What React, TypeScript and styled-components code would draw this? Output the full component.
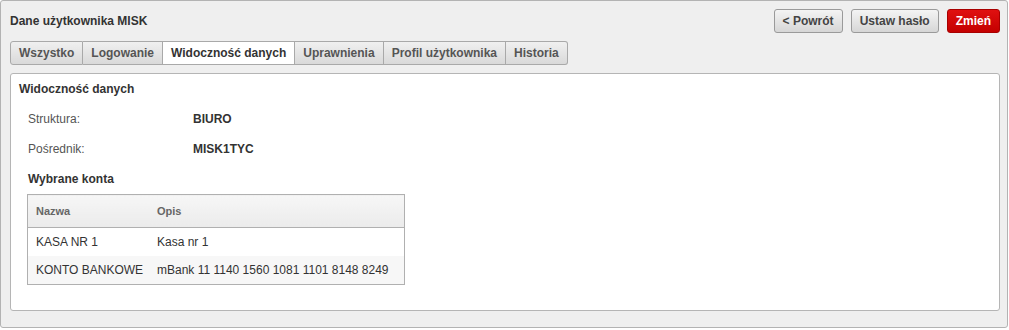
import React from 'react';
import styled, { createGlobalStyle, css } from 'styled-components';

const GlobalStyle = createGlobalStyle`
  html, body {
    margin: 0;
    padding: 0;
    background: #ffffff;
  }
  body {
    font-family: "Liberation Sans", Arial, sans-serif;
    font-size: 12px;
    color: #333;
  }
`;

const Panel = styled.div`
  box-sizing: border-box;
  width: 1008px;
  height: 328px;
  background: #efefef;
  border: 1px solid #b3b3b3;
  border-radius: 3px;
  padding: 8px 7px 0 9px;
`;

const Header = styled.div`
  display: flex;
  align-items: center;
  justify-content: space-between;
  height: 24px;
`;

const Title = styled.h1`
  margin: 0;
  font-size: 12px;
  font-weight: bold;
  color: #333;
`;

const Actions = styled.div`
  display: flex;
  gap: 8px;
`;

const Button = styled.button<{ $primary?: boolean }>`
  box-sizing: border-box;
  height: 24px;
  padding: 0 8px;
  font-family: inherit;
  font-size: 12px;
  font-weight: bold;
  border-radius: 3px;
  cursor: pointer;
  ${(p) =>
    p.$primary
      ? css`
          color: #fff;
          border: 1px solid #a80000;
          background: linear-gradient(#e01010, #c40000);
        `
      : css`
          color: #444;
          border: 1px solid #9a9a9a;
          background: linear-gradient(#f4f4f4, #d6d6d6);
        `}
`;

const Tabs = styled.div`
  display: flex;
  margin-top: 8px;
`;

const Tab = styled.div<{ $active?: boolean }>`
  box-sizing: border-box;
  height: 24px;
  line-height: 22px;
  padding: 0 8px;
  font-weight: bold;
  color: ${(p) => (p.$active ? '#333' : '#555')};
  border: 1px solid #a9a9a9;
  border-left: none;
  background: ${(p) => (p.$active ? '#fff' : 'linear-gradient(#f0f0f0, #d9d9d9)')};
  &:first-child {
    border-left: 1px solid #a9a9a9;
    border-radius: 3px 0 0 3px;
  }
  &:last-child {
    border-radius: 0 3px 3px 0;
  }
`;

const Content = styled.div`
  box-sizing: border-box;
  margin-top: 8px;
  width: 990px;
  height: 238px;
  background: #fff;
  border: 1px solid #b5b5b5;
  border-radius: 3px;
  padding: 8px 8px 0 8px;
`;

const SectionTitle = styled.h2`
  margin: 0;
  font-size: 12px;
  font-weight: bold;
  color: #333;
  line-height: 15px;
`;

const Fields = styled.div`
  margin-top: 15px;
  padding-left: 9px;
  display: grid;
  grid-template-columns: 165px 1fr;
  row-gap: 15px;
  line-height: 15px;
`;

const Label = styled.div`
  color: #555;
`;

const Value = styled.div`
  font-weight: bold;
  color: #333;
`;

const SubTitle = styled(SectionTitle)`
  margin-top: 15px;
  padding-left: 9px;
`;

const Table = styled.table`
  margin: 7px 0 0 8px;
  border-collapse: collapse;
  border: 1px solid #b0b0b0;
  width: 378px;
  table-layout: fixed;
`;

const Th = styled.th`
  height: 32px;
  text-align: left;
  font-size: 11px;
  font-weight: bold;
  color: #666;
  padding: 0 8px;
  background: linear-gradient(#f6f6f6, #ebebeb);
  border-bottom: 1px solid #b0b0b0;
  &:first-child {
    width: 105px;
  }
`;

const Tr = styled.tr<{ $alt?: boolean }>`
  background: ${(p) => (p.$alt ? '#f7f7f7' : '#fff')};
  & + & td {
    border-top: 1px solid #dcdcdc;
  }
`;

const Td = styled.td`
  height: 28px;
  padding: 0 8px;
  color: #333;
  white-space: nowrap;
`;

const rows = [
  { nazwa: 'KASA NR 1', opis: 'Kasa nr 1' },
  { nazwa: 'KONTO BANKOWE', opis: 'mBank 11 1140 1560 1081 1101 8148 8249' },
];

const tabs = ['Wszystko', 'Logowanie', 'Widoczność danych', 'Uprawnienia', 'Profil użytkownika', 'Historia'];

export default function App() {
  return (
    <>
      <GlobalStyle />
      <Panel>
        <Header>
          <Title>Dane użytkownika MISK</Title>
          <Actions>
            <Button>&lt; Powrót</Button>
            <Button>Ustaw hasło</Button>
            <Button $primary>Zmień</Button>
          </Actions>
        </Header>
        <Tabs>
          {tabs.map((t) => (
            <Tab key={t} $active={t === 'Widoczność danych'}>
              {t}
            </Tab>
          ))}
        </Tabs>
        <Content>
          <SectionTitle>Widoczność danych</SectionTitle>
          <Fields>
            <Label>Struktura:</Label>
            <Value>BIURO</Value>
            <Label>Pośrednik:</Label>
            <Value>MISK1TYC</Value>
          </Fields>
          <SubTitle>Wybrane konta</SubTitle>
          <Table>
            <thead>
              <tr>
                <Th>Nazwa</Th>
                <Th>Opis</Th>
              </tr>
            </thead>
            <tbody>
              {rows.map((r, i) => (
                <Tr key={r.nazwa} $alt={i % 2 === 1}>
                  <Td>{r.nazwa}</Td>
                  <Td>{r.opis}</Td>
                </Tr>
              ))}
            </tbody>
          </Table>
        </Content>
      </Panel>
    </>
  );
}
